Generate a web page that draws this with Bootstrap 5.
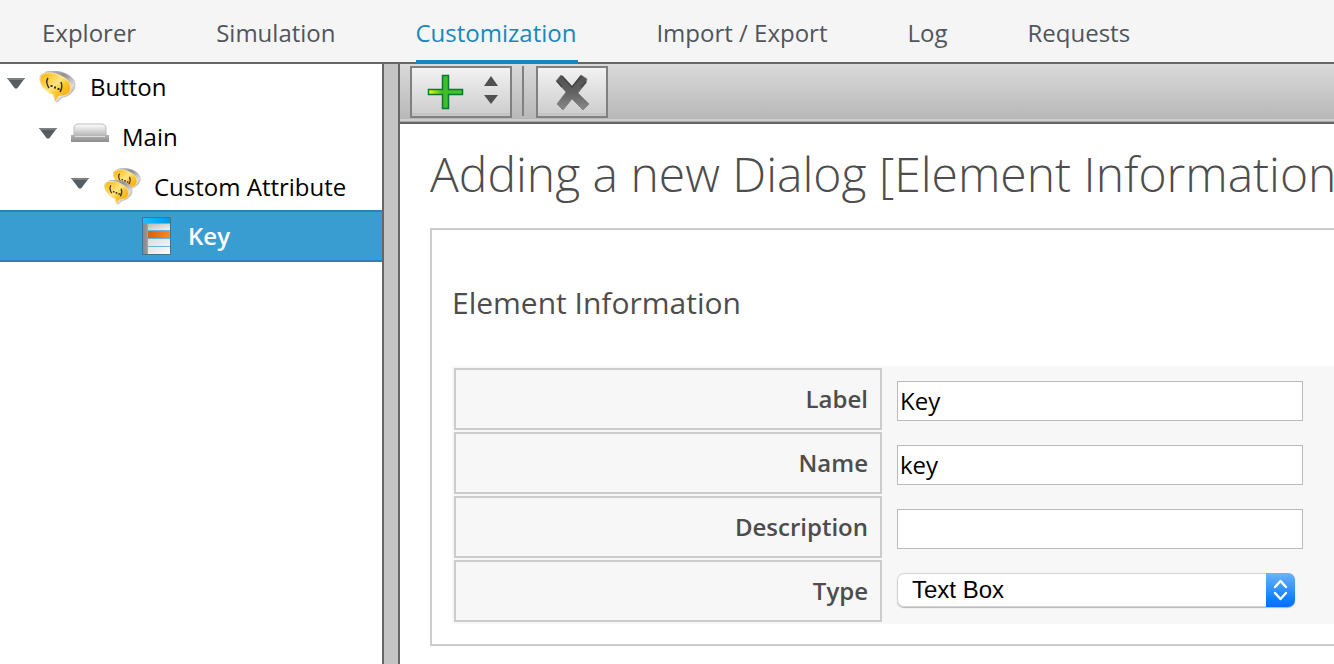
<!DOCTYPE html>
<html lang="en">
<head>
<meta charset="utf-8">
<meta name="viewport" content="width=device-width, initial-scale=1">
<title>Customization</title>
<link href="https://cdn.jsdelivr.net/npm/bootstrap@5.3.0/dist/css/bootstrap.min.css" rel="stylesheet">
<style>
body { font: 24px/36px "Open Sans", "Noto Sans", sans-serif; color: #4d4d4d; background: #fff; }
.topbar { background: #f5f5f5; border-bottom: 2px solid #666; padding-left: 42px; gap: 78px; height: 64px; }
.topbar .nav-link { color: #50555c; padding: 15px 2px 9px 0; border-bottom: 4px solid transparent; white-space: nowrap; height: 64px; }
.topbar .nav-link.active { color: #1589bd; border-bottom-color: #1589bd; }
.sidebar { width: 382px; }
.tree-item { height: 50px; color: #000; gap: 12px; padding-bottom: 4px; text-decoration: none; }
.tree-item .toggle { width: 20px; height: 12px; margin: 0 4px 8px 0; }
.lvl-1 { padding-left: 6px; gap: 14px; }
.lvl-2 { padding-left: 38px; }
.lvl-3 { padding-left: 70px; }
.lvl-4 { padding-left: 142px; gap: 16px; }
.tree-item.selected { height: 52px; margin-top: -4px; padding-bottom: 0; color: #fff; font-weight: 600; background: #3a9dd1; border-top: 2px solid #2d80b3; border-bottom: 2px solid #2d80b3; }
.splitter { width: 18px; background: #c4c4c4; border: solid #666; border-width: 0 2px; }
.workspace { min-width: 0; }
.toolbar { height: 60px; padding: 2px 10px 0; background: linear-gradient(#dadada, #b8b8b8 94%, #cdcdcd 95%, #cdcdcd 98%, #aaa 99%); border-bottom: 2px solid #666; }
.tool { height: 52px; padding: 0; border: 2px solid #808080; border-radius: 0; background: linear-gradient(#f2f2f2, #cecece 94%, #c0c0c0 95%, #cacaca); }
.tool svg { display: block; }
.tool-add { width: 102px; }
.tool-del { width: 72px; }
.rule { width: 2px; height: 50px; margin: 0 12px 0 10px; background: #808080; }
.page-body { padding: 16px 0 18px 30px; }
.page-title { font-size: 48px; line-height: 68px; font-weight: 300; margin-bottom: 20px; white-space: nowrap; }
.panel { border: 2px solid #ccc; border-right: 0; padding: 50px 0 20px 20px; }
.panel h2 { font-size: 30px; line-height: 46px; margin-bottom: 40px; font-weight: 400; }
.form-grid { width: 100%; table-layout: fixed; border-collapse: separate; border-spacing: 2px; background: #f7f7f7; }
.form-grid th { width: 428px; height: 62px; padding: 0 12px; border: 2px solid #ccc; text-align: right; font-weight: 600; }
.form-grid td { height: 62px; padding: 4px 29px 0 13px; vertical-align: middle; }
.form-grid input { display: block; width: 100%; height: 40px; padding: 0 2px 2px; border: 1px solid #bbb; color: #000; background: #fff; border-radius: 0; }
.picker { display: block; height: 34px; margin-right: 8px; margin-bottom: 6px; position: relative; border-radius: 7px; box-shadow: 0 0 0 1px #d4d4d4 inset, 0 1px 1px #b5b5b5; background: #fff; overflow: hidden; }
.picker select { width: 100%; height: 34px; appearance: none; border: 0; background: transparent; padding: 0 40px 0 15px; color: #000; font: 24px/34px "Liberation Sans", sans-serif; display: block; }
.picker .cap { position: absolute; right: 0; top: 0; width: 29px; height: 34px; pointer-events: none; background: linear-gradient(#6cb3fa, #0a7dff 80%, #0a6cff); }
</style>
</head>
<body class="d-flex flex-column min-vh-100">
<nav class="topbar nav flex-nowrap flex-shrink-0">
  <a class="nav-link" href="#">Explorer</a>
  <a class="nav-link" href="#">Simulation</a>
  <a class="nav-link active" href="#" aria-current="page">Customization</a>
  <a class="nav-link" href="#">Import / Export</a>
  <a class="nav-link" href="#">Log</a>
  <a class="nav-link" href="#">Requests</a>
</nav>

<svg width="0" height="0" class="position-absolute" aria-hidden="true">
  <defs>
    <linearGradient id="gold" x1="0" y1="0" x2="1" y2="1"><stop offset="0" stop-color="#ffb000"/><stop offset=".45" stop-color="#ffe680"/><stop offset=".6" stop-color="#ffc62c"/><stop offset="1" stop-color="#f59c00"/></linearGradient>
    <linearGradient id="steel" x1="0" y1="0" x2="1" y2="1"><stop offset="0" stop-color="#d5d5d5"/><stop offset=".4" stop-color="#8e8e8e"/><stop offset=".7" stop-color="#dedede"/><stop offset="1" stop-color="#777"/></linearGradient>
    <linearGradient id="plate" x1="0" y1="0" x2="0" y2="1"><stop offset="0" stop-color="#fff"/><stop offset="1" stop-color="#b4b4b4"/></linearGradient>
    <linearGradient id="base" x1="0" y1="0" x2="0" y2="1"><stop offset="0" stop-color="#b4b4b4"/><stop offset="1" stop-color="#8c8c8c"/></linearGradient>
    <linearGradient id="green"><stop offset="0" stop-color="#f4ff00"/><stop offset=".4" stop-color="#3fbd28"/><stop offset="1" stop-color="#45c52b"/></linearGradient>
    <linearGradient id="dark" x1="0" y1="0" x2="0" y2="1"><stop offset="0" stop-color="#505050"/><stop offset=".5" stop-color="#626262"/><stop offset="1" stop-color="#8a8a8a"/></linearGradient>
    <linearGradient id="grey"><stop offset="0" stop-color="#888"/><stop offset="1" stop-color="#d5d5d5"/></linearGradient>
    <linearGradient id="cell" x1="0" y1="0" x2="1" y2="1"><stop offset="0" stop-color="#bcbcbc"/><stop offset="1" stop-color="#f4f4f4"/></linearGradient>
    <linearGradient id="cell-light" x1="0" y1="0" x2="1" y2="1"><stop offset="0" stop-color="#ddd"/><stop offset="1" stop-color="#fafafa"/></linearGradient>
    <linearGradient id="sky"><stop offset="0" stop-color="#18bff4"/><stop offset="1" stop-color="#0099e8"/></linearGradient>
    <linearGradient id="orange"><stop offset="0" stop-color="#e25c0c"/><stop offset="1" stop-color="#f58a2b"/></linearGradient>
    <symbol id="bubble" viewBox="0 0 38 32">
      <path d="M8 1C15-1 26 0 33 6c6 5 5 13-1 17-2 2-5 3-7 3l-6 5-2-1-2-7C6 20-1 9 3 4z" fill="url(#steel)" stroke="#aaa" stroke-width=".6"/>
      <path d="M5 3C11 0 22 3 28 8c6 5 6 11 2 15-3 2-6 2-9 2l-4 6-1-7C6 21-3 9 5 3z" fill="url(#gold)" stroke="#fff5bd" stroke-width=".7"/>
      <path d="M10 7q-3 4 1 10M23 11q2 5-1 10" fill="none" stroke="#333" stroke-width="1.500"/>
      <path d="M12.500 14h2v2h-2zM16 15.500h2v2h-2zM19.500 17h2v2h-2z" fill="#333"/>
    </symbol>
    <symbol id="tri" viewBox="0 0 20 12"><path d="M1 1h18l-7.500 10q-1.500 1-3 0z" fill="#565c60"/><path d="M1 1h18l-1.500 2h-15z" fill="#7c8082"/></symbol>
  </defs>
</svg>

<div class="d-flex flex-grow-1">
  <aside class="sidebar flex-shrink-0">
    <a href="#" class="tree-item lvl-1 d-flex align-items-center"><span class="d-flex align-items-center"><svg class="toggle"><use href="#tri"/></svg><svg class="ms-2" width="38" height="32"><use href="#bubble"/></svg></span><span>Button</span></a>
    <a href="#" class="tree-item lvl-2 d-flex align-items-center"><span class="d-flex align-items-center"><svg class="toggle"><use href="#tri"/></svg><svg class="ms-2 mb-2" width="40" height="20" viewBox="0 0 40 20"><path d="M4 13V5q0-4 5-4h22q5 0 5 4v8z" fill="url(#plate)" stroke="#bbb"/><path d="M1 12h4v2h30v-2h4v7H1z" fill="url(#base)"/></svg></span><span>Main</span></a>
    <a href="#" class="tree-item lvl-3 d-flex align-items-center"><span class="d-flex align-items-center"><svg class="toggle"><use href="#tri"/></svg><svg class="ms-2" width="40" height="38" viewBox="0 0 40 38"><use href="#bubble" x="10" y="0" width="29" height="25"/><use href="#bubble" x="1" y="12" width="30" height="25"/></svg></span><span>Custom Attribute</span></a>
    <a href="#" class="tree-item lvl-4 selected d-flex align-items-center"><svg width="30" height="40" viewBox="0 0 30 40"><path d="M.5 1.500h28v37H.5z" fill="url(#grey)" stroke="#397795"/><path d="M1 2h27v5H1z" fill="url(#sky)"/><path d="M6 8h22v6H6z" fill="url(#cell)"/><path d="M6 23h22v7H6zM6 31h22v7H6z" fill="url(#cell-light)"/><path d="M6 15h22v7H6z" fill="url(#orange)"/><path d="M6 7.500h22M6 14.500h22M6 22.500h22M6 30.500h22M5.500 8v30" stroke="#65b5df" fill="none"/></svg><span>Key</span></a>
  </aside>
  <div class="splitter flex-shrink-0"></div>
  <main class="workspace flex-grow-1 overflow-hidden">
    <div class="toolbar d-flex align-items-start">
      <button type="button" class="tool tool-add" aria-label="Add">
        <svg width="98" height="48" viewBox="0 0 98 48"><path d="M30.500 7.500h6v14h14v5h-14v14h-6v-14h-14v-5h14z" fill="url(#green)" stroke="#087a35" stroke-width="1.500"/><path d="M79 8l7 10H72zM79 36l7-9H72z" fill="#505050"/></svg>
      </button>
      <span class="rule"></span>
      <button type="button" class="tool tool-del" aria-label="Delete">
        <svg width="68" height="48" viewBox="0 0 68 48"><path d="M23 7l11 12L43 7l6 4-1 4-8 10 11 11-6 6-11-11-9 11-6-6 9-12L18 13z" fill="url(#dark)" stroke="#777" stroke-width=".7"/><path d="M19 13l5 6M48 14l-5 5M24 8l10 11 9-11" fill="none" stroke="#444" stroke-width="1.500"/></svg>
      </button>
    </div>
    <div class="page-body">
      <h1 class="page-title">Adding a new Dialog [Element Information</h1>
      <section class="panel">
        <h2>Element Information</h2>
        <table class="form-grid">
          <tr><th scope="row"><label for="f-label">Label</label></th><td><input id="f-label" type="text" value="Key"></td></tr>
          <tr><th scope="row"><label for="f-name">Name</label></th><td><input id="f-name" type="text" value="key"></td></tr>
          <tr><th scope="row"><label for="f-desc">Description</label></th><td><input id="f-desc" type="text"></td></tr>
          <tr><th scope="row"><label for="f-type">Type</label></th><td><div class="picker"><select id="f-type"><option>Text Box</option></select><svg class="cap" viewBox="0 0 29 34"><path d="M9 14l5.500-6 5.500 6M9 20l5.500 6 5.500-6" fill="none" stroke="#fff" stroke-width="2.400" stroke-linecap="round" stroke-linejoin="round"/></svg></div></td></tr>
        </table>
      </section>
    </div>
  </main>
</div>
<script src="https://cdn.jsdelivr.net/npm/bootstrap@5.3.0/dist/js/bootstrap.bundle.min.js"></script>
</body>
</html>
